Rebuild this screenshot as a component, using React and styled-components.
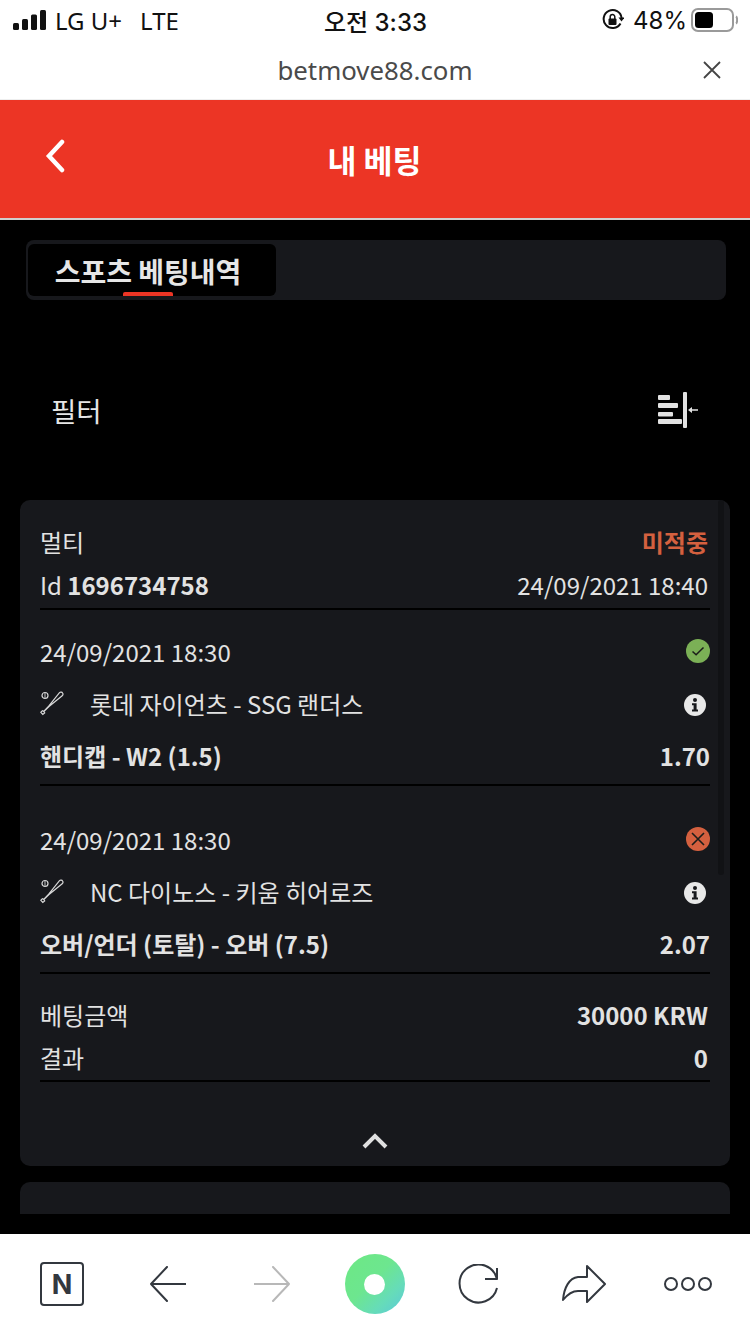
import React from 'react';
import styled, { createGlobalStyle } from 'styled-components';

const KR = `'Noto Sans CJK KR', 'Noto Sans', sans-serif`;
const IOS = `Inter, 'Noto Sans CJK KR', sans-serif`;

const GlobalStyle = createGlobalStyle`
    html, body {
        margin: 0;
        padding: 0;
        background: #000;
    }
    * {
        box-sizing: border-box;
    }
`;

const Page = styled.div`
    width: 750px;
    height: 1334px;
    display: flex;
    flex-direction: column;
    font-family: ${KR};
    background: #000;
    overflow: hidden;
`;

const StatusBar = styled.div`
    height: 44px;
    flex: none;
    display: grid;
    grid-template-columns: 1fr auto 1fr;
    align-items: center;
    padding: 0 12px 4px 13px;
    background: #fff;
    color: #111;
    font-family: ${IOS};
    font-size: 24px;
`;

const StatusLeft = styled.div`
    display: flex;
    align-items: center;
    gap: 9px;
`;

const Carrier = styled.span`
    font-family: 'Noto Sans', sans-serif;
    font-size: 24px;
    margin-right: ${p => p.$gap || 0}px;
`;

const Clock = styled.span`
    font-size: 24px;
    font-weight: 500;
`;

const StatusRight = styled.div`
    display: flex;
    align-items: center;
    justify-content: flex-end;
    gap: 9px;
`;

const Percent = styled.span`
    margin-right: -5px;
`;

const UrlBar = styled.div`
    height: 56px;
    flex: none;
    display: grid;
    grid-template-columns: 1fr auto 1fr;
    align-items: center;
    padding: 0 29px 3px 29px;
    background: #fff;
    border-bottom: 1px solid #eee;
`;

const Url = styled.span`
    grid-column: 2;
    font-family: 'Noto Sans', sans-serif;
    font-size: 25.8px;
    color: #4a4a4a;
`;

const UrlClose = styled.div`
    justify-self: end;
    display: flex;
`;

const Header = styled.header`
    height: 120px;
    flex: none;
    display: grid;
    grid-template-columns: 1fr auto 1fr;
    align-items: center;
    background: #ec3525;
    border-bottom: 2px solid #cfcfcf;
`;

const BackButton = styled.div`
    display: flex;
    margin: -6px 0 0 44px;
`;

const HeaderTitle = styled.h1`
    margin: 0 0 0 -1px;
    font-size: 31.5px;
    font-weight: 700;
    color: #fff;
`;

const Main = styled.main`
    flex: 1;
    display: flex;
    flex-direction: column;
    min-height: 0;
    padding: 20px 20px 20px;
`;

const TabBox = styled.div`
    height: 60px;
    flex: none;
    margin: 0 4px 0 6px;
    padding: 4px 2px;
    border-radius: 8px;
    background: #17181c;
`;

const Tab = styled.div`
    position: relative;
    width: 248px;
    height: 52px;
    display: flex;
    align-items: center;
    justify-content: center;
    padding: 2px 8px 0 0;
    border-radius: 6px;
    background: #000;
    color: #e6e6e6;
    font-size: 28px;
    font-weight: 700;
    &::after {
        content: '';
        position: absolute;
        left: 95px;
        bottom: 0;
        width: 50px;
        height: 4px;
        border-radius: 2px 2px 0 0;
        background: #ec3525;
    }
`;

const FilterRow = styled.div`
    height: 200px;
    flex: none;
    display: flex;
    align-items: center;
    justify-content: space-between;
    padding: 20px 32px 0 31px;
    color: #e6e6e6;
    font-size: 27.5px;
`;

const Scroller = styled.div`
    flex: 1;
    min-height: 0;
    display: flex;
    flex-direction: column;
    gap: 16px;
    overflow: hidden;
`;

const Card = styled.section`
    position: relative;
    flex: none;
    height: ${p => p.$height}px;
    padding: 21px 20px 0;
    border-radius: 10px;
    background: #17181c;
    color: #e2e2e2;
`;

const ScrollThumb = styled.div`
    position: absolute;
    top: 0;
    right: 6px;
    width: 6px;
    height: 375px;
    border-radius: 3px;
    background: #111215;
`;

const Row = styled.div`
    height: ${p => p.$height || 44}px;
    display: flex;
    align-items: center;
    justify-content: space-between;
    padding-bottom: 4px;
    font-size: 24px;
    ${p => p.$line && 'border-bottom: 2px solid #000;'}
    > span:last-child {
        margin-right: 2px;
    }
`;

const Strong = styled.span`
    font-weight: 700;
`;

const Odds = styled(Strong)`
    &&& {
        margin-right: 0;
    }
`;

const Fail = styled.span`
    color: #d4603f;
    font-weight: 700;
`;

const Match = styled.div`
    display: flex;
    align-items: center;
    gap: 26px;
`;

const LegList = styled.div`
    display: flex;
    flex-direction: column;
    gap: 29px;
    padding-top: 17px;
`;

const Summary = styled.div`
    padding-top: 20px;
`;

const Collapse = styled.div`
    display: flex;
    justify-content: center;
    padding-top: 51px;
`;

const BottomBar = styled.nav`
    height: 100px;
    flex: none;
    display: grid;
    grid-template-columns: repeat(7, 1fr);
    align-items: center;
    justify-items: center;
    padding: 0 10px;
    background: #fff;
`;

const NBox = styled.div`
    width: 44px;
    height: 44px;
    display: flex;
    align-items: center;
    justify-content: center;
    border: 2px solid #33383f;
    border-radius: 4px;
    color: #33383f;
    font-family: Inter, sans-serif;
    font-size: 27px;
    font-weight: 700;
`;

const Whale = styled.div`
    width: 60px;
    height: 60px;
    display: flex;
    align-items: center;
    justify-content: center;
    border-radius: 50%;
    background: linear-gradient(135deg, #6de884 0%, #6de68f 45%, #66dcb8 72%, #5bc9dc 100%);
    &::after {
        content: '';
        width: 21px;
        height: 21px;
        border-radius: 50%;
        background: #fff;
    }
`;

const ArrowSvg = styled.svg`
    margin-left: 3px;
    ${p => p.$flip && 'transform: scaleX(-1);'}
`;

const InfoSvg = styled.svg`
    margin: 4px 4px 0 0;
`;

const SignalIcon = () => (
    <svg width="33" height="20" viewBox="0 0 33 20">
        <rect x="0" y="13" width="6" height="7" rx="1.5" fill="#111" />
        <rect x="9" y="9" width="6" height="11" rx="1.5" fill="#111" />
        <rect x="18" y="4.5" width="6" height="15.5" rx="1.5" fill="#111" />
        <rect x="27" y="0" width="6" height="20" rx="1.5" fill="#111" />
    </svg>
);

const RotationLockIcon = () => (
    <svg width="22" height="22" viewBox="0 0 22 22" fill="none">
        <path d="M18.5 14.5A9 9 0 1 1 19.6 9" stroke="#111" strokeWidth="2" />
        <path d="M16.5 8.5h6l-3 4z" fill="#111" />
        <rect x="6.5" y="9.5" width="8" height="6.5" rx="1" fill="#111" />
        <path d="M8.2 10V7.8a2.3 2.3 0 0 1 4.6 0V10" stroke="#111" strokeWidth="1.5" />
    </svg>
);

const BatteryIcon = () => (
    <svg width="47" height="24" viewBox="0 0 47 24" fill="none">
        <rect x="1" y="1" width="41" height="22" rx="6" stroke="#9a9a9a" strokeWidth="2" />
        <rect x="4" y="4" width="18" height="16" rx="3.5" fill="#000" />
        <path d="M45 8.5c1.5.8 1.5 6.2 0 7" stroke="#9a9a9a" strokeWidth="2" />
    </svg>
);

const CloseIcon = () => (
    <svg width="18" height="18" viewBox="0 0 18 18" fill="none">
        <path d="M1 1l16 16M17 1L1 17" stroke="#444" strokeWidth="1.8" />
    </svg>
);

const BackIcon = () => (
    <svg width="22" height="34" viewBox="0 0 22 34" fill="none">
        <path d="M18 3L5 17l13 14" stroke="#fff" strokeWidth="4.5" strokeLinecap="round" />
    </svg>
);

const FilterIcon = () => (
    <svg width="40" height="36" viewBox="0 0 40 36">
        <g fill="#e2e2e2">
            <rect x="0" y="3" width="12" height="5" rx="1" />
            <rect x="0" y="11" width="20" height="5" rx="1" />
            <rect x="0" y="20" width="15" height="4.5" rx="1" />
            <rect x="0" y="27" width="24" height="5" rx="1" />
            <rect x="25" y="0" width="4" height="36" rx="1" />
            <path d="M30 18l4-3v2.2h6v1.6h-6V21z" />
        </g>
    </svg>
);

const BatIcon = () => (
    <svg width="24" height="25" viewBox="0 0 24 25" fill="none" stroke="#d8d8d8" strokeWidth="1.2">
        <circle cx="5" cy="4.5" r="3" />
        <path d="M5 2v5" strokeWidth="0.9" />
        <path d="M19.5 1.6c1-.8 2.6-.4 3.1.4.6.9.4 2-.4 2.8L9 15.5l-5.2 5 .9 1.4-1.9 1.6-2-2.2 1.6-1.6 1.3.7 5-5.2z" />
    </svg>
);

const CheckIcon = () => (
    <svg width="24" height="24" viewBox="0 0 24 24" fill="none">
        <circle cx="12" cy="12" r="12" fill="#7bb056" />
        <path d="M6.5 12.5l3.6 3.3 7.4-7.3" stroke="#1b1d1a" strokeWidth="1.5" />
    </svg>
);

const CrossIcon = () => (
    <svg width="24" height="24" viewBox="0 0 24 24" fill="none">
        <circle cx="12" cy="12" r="12" fill="#d4603f" />
        <path d="M6 6l12 12M18 6L6 18" stroke="#1b1d1a" strokeWidth="1.6" />
    </svg>
);

const InfoIcon = () => (
    <InfoSvg width="22" height="22" viewBox="0 0 22 22">
        <circle cx="11" cy="11" r="11" fill="#e8e8e8" />
        <circle cx="11" cy="6" r="2" fill="#17181c" />
        <path d="M8 9.3h4.6v6.2H14v2H8v-2h1.6v-4.2H8z" fill="#17181c" />
    </InfoSvg>
);

const ChevronUpIcon = () => (
    <svg width="26" height="16" viewBox="0 0 26 16" fill="none">
        <path d="M2 14L13 3l11 11" stroke="#e0e0e0" strokeWidth="4" />
    </svg>
);

const ArrowIcon = ({ color, flip }) => (
    <ArrowSvg $flip={flip} width="36" height="36" viewBox="0 0 36 36" fill="none">
        <path d="M17 1L1 18l16 17M1 18h35" stroke={color} strokeWidth="2" strokeLinecap="round" strokeLinejoin="round" />
    </ArrowSvg>
);

const ReloadIcon = () => (
    <svg width="42" height="40" viewBox="0 0 42 40" fill="none">
        <path d="M39 24A19 19 0 1 1 39 15V4M39 15H27" stroke="#33383f" strokeWidth="2" strokeLinejoin="round" />
    </svg>
);

const ShareIcon = () => (
    <svg width="44" height="38" viewBox="0 0 44 38" fill="none">
        <path d="M25 1l18 18-18 18V26h-9C9 26 5 30 1 35c1-12 6-22 15-23h9z" stroke="#33383f" strokeWidth="2" strokeLinejoin="round" />
    </svg>
);

const MoreIcon = () => (
    <svg width="48" height="16" viewBox="0 0 48 16" fill="none" stroke="#33383f" strokeWidth="2">
        <circle cx="7" cy="8" r="6" />
        <circle cx="24" cy="8" r="6" />
        <circle cx="41" cy="8" r="6" />
    </svg>
);

const legs = [
    {
        date: '24/09/2021 18:30',
        match: '롯데 자이언츠 - SSG 랜더스',
        market: '핸디캡 - W2 (1.5)',
        odds: '1.70',
        won: true,
    },
    {
        date: '24/09/2021 18:30',
        match: 'NC 다이노스 - 키움 히어로즈',
        market: '오버/언더 (토탈) - 오버 (7.5)',
        odds: '2.07',
        won: false,
    },
];

const App = () => {
    return (
        <>
            <GlobalStyle />
            <Page>
                <StatusBar>
                    <StatusLeft>
                        <SignalIcon />
                        <Carrier $gap={9}>LG U+</Carrier>
                        <Carrier>LTE</Carrier>
                    </StatusLeft>
                    <Clock>오전 3:33</Clock>
                    <StatusRight>
                        <RotationLockIcon />
                        <Percent>48%</Percent>
                        <BatteryIcon />
                    </StatusRight>
                </StatusBar>
                <UrlBar>
                    <Url>betmove88.com</Url>
                    <UrlClose>
                        <CloseIcon />
                    </UrlClose>
                </UrlBar>
                <Header>
                    <BackButton>
                        <BackIcon />
                    </BackButton>
                    <HeaderTitle>내 베팅</HeaderTitle>
                </Header>
                <Main>
                    <TabBox>
                        <Tab>스포츠 베팅내역</Tab>
                    </TabBox>
                    <FilterRow>
                        <span>필터</span>
                        <FilterIcon />
                    </FilterRow>
                    <Scroller>
                        <Card $height={666}>
                            <ScrollThumb />
                            <Row>
                                <span>멀티</span>
                                <Fail>미적중</Fail>
                            </Row>
                            <Row $line $height={45}>
                                <span>Id <Strong>1696734758</Strong></span>
                                <span>24/09/2021 18:40</span>
                            </Row>
                            <LegList>
                                {legs.map(leg => (
                                    <div key={leg.match}>
                                        <Row $height={52}>
                                            <span>{leg.date}</span>
                                            {leg.won ? <CheckIcon /> : <CrossIcon />}
                                        </Row>
                                        <Row $height={52}>
                                            <Match>
                                                <BatIcon />
                                                <span>{leg.match}</span>
                                            </Match>
                                            <InfoIcon />
                                        </Row>
                                        <Row $height={55} $line>
                                            <Strong>{leg.market}</Strong>
                                            <Odds>{leg.odds}</Odds>
                                        </Row>
                                    </div>
                                ))}
                            </LegList>
                            <Summary>
                                <Row>
                                    <span>베팅금액</span>
                                    <Strong>30000 KRW</Strong>
                                </Row>
                                <Row $line>
                                    <span>결과</span>
                                    <Strong>0</Strong>
                                </Row>
                            </Summary>
                            <Collapse>
                                <ChevronUpIcon />
                            </Collapse>
                        </Card>
                        <Card $height={200} />
                    </Scroller>
                </Main>
                <BottomBar>
                    <NBox>N</NBox>
                    <ArrowIcon color="#33383f" />
                    <ArrowIcon color="#b8b8b8" flip />
                    <Whale />
                    <ReloadIcon />
                    <ShareIcon />
                    <MoreIcon />
                </BottomBar>
            </Page>
        </>
    );
};

export default App;
